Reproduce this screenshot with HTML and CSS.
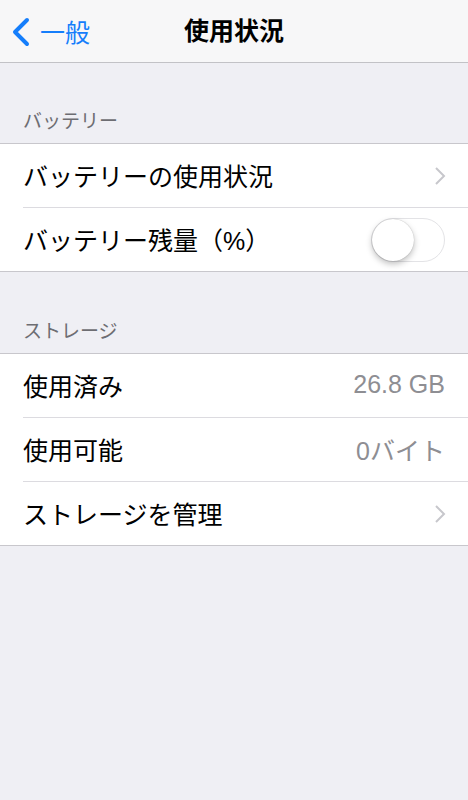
FILE: index.html
```html
<!DOCTYPE html>
<html lang="ja">
<head>
    <meta charset="UTF-8">
    <meta name="viewport" content="width=device-width, initial-scale=1.0">
    <title>使用状況</title>
    <link rel="stylesheet" href="styles.css">
</head>
<body>

    <div class="navbar">
        <a class="nav-back" href="#">
            <svg class="back-chevron" width="20" height="30" viewBox="0 0 20 30">
                <path d="M16 3 L4 15 L16 27" fill="none" stroke="#157efb" stroke-width="4" stroke-linecap="round" stroke-linejoin="round"/>
            </svg>
            <span>一般</span>
        </a>
        <h1 class="nav-title">使用状況</h1>
    </div>

    <div class="section-header">バッテリー</div>
    <div class="group">
        <div class="row">
            <span class="row-label">バッテリーの使用状況</span>
            <svg class="chevron" width="12" height="20" viewBox="0 0 12 20">
                <path d="M2 2 L10 10 L2 18" fill="none" stroke="#c7c7cc" stroke-width="2"/>
            </svg>
        </div>
        <div class="row">
            <span class="row-label">バッテリー残量（%）</span>
            <div class="switch"><div class="knob"></div></div>
        </div>
    </div>

    <div class="section-header second">ストレージ</div>
    <div class="group">
        <div class="row">
            <span class="row-label">使用済み</span>
            <span class="row-value">26.8 GB</span>
        </div>
        <div class="row">
            <span class="row-label">使用可能</span>
            <span class="row-value">0バイト</span>
        </div>
        <div class="row">
            <span class="row-label">ストレージを管理</span>
            <svg class="chevron" width="12" height="20" viewBox="0 0 12 20">
                <path d="M2 2 L10 10 L2 18" fill="none" stroke="#c7c7cc" stroke-width="2"/>
            </svg>
        </div>
    </div>

</body>
</html>
```

FILE: styles.css
```css
body {
    margin: 0;
    background: #efeff4;
    font-family: "Liberation Sans", "Noto Sans CJK JP", sans-serif;
    color: #000;
    min-height: 800px;
}

.navbar {
    height: 62px;
    background: #f7f7f8;
    border-bottom: 1px solid #c2c2c6;
    display: flex;
    align-items: center;
    justify-content: center;
    position: relative;
}

.nav-back {
    position: absolute;
    left: 11px;
    top: 0;
    height: 62px;
    display: flex;
    align-items: center;
    gap: 9px;
    color: #157efb;
    text-decoration: none;
    font-size: 25px;
}

.back-chevron {
    margin-top: 1px;
}

.nav-title {
    margin: 0;
    font-size: 25px;
    font-weight: bold;
    line-height: 30px;
}

.section-header {
    padding: 47px 23px 9px;
    line-height: 24px;
    font-size: 19px;
    color: #6d6d72;
}

.section-header.second {
    padding-top: 48px;
}

.group {
    background: #fff;
    border-top: 1px solid #c8c7cc;
    border-bottom: 1px solid #c8c7cc;
}

.row {
    height: 63px;
    margin-left: 23px;
    padding-right: 23px;
    display: flex;
    align-items: center;
    justify-content: space-between;
    border-top: 1px solid #dcdbe0;
}

.row:first-child {
    border-top: none;
}

.row-label {
    font-size: 25px;
    margin-top: -2px;
}

.row-value {
    font-size: 25px;
    color: #8e8e93;
    margin-top: -2px;
}

.chevron {
    margin-right: -1px;
}

.switch {
    width: 72px;
    height: 42px;
    border: 1px solid #e3e3e6;
    border-radius: 22px;
    background: #fff;
    position: relative;
}

.knob {
    position: absolute;
    left: 0;
    top: 0;
    width: 42px;
    height: 42px;
    border-radius: 50%;
    background: #fff;
    box-shadow: 0 3px 6px rgba(0, 0, 0, 0.25), 0 0 1px rgba(0, 0, 0, 0.3);
}
```
